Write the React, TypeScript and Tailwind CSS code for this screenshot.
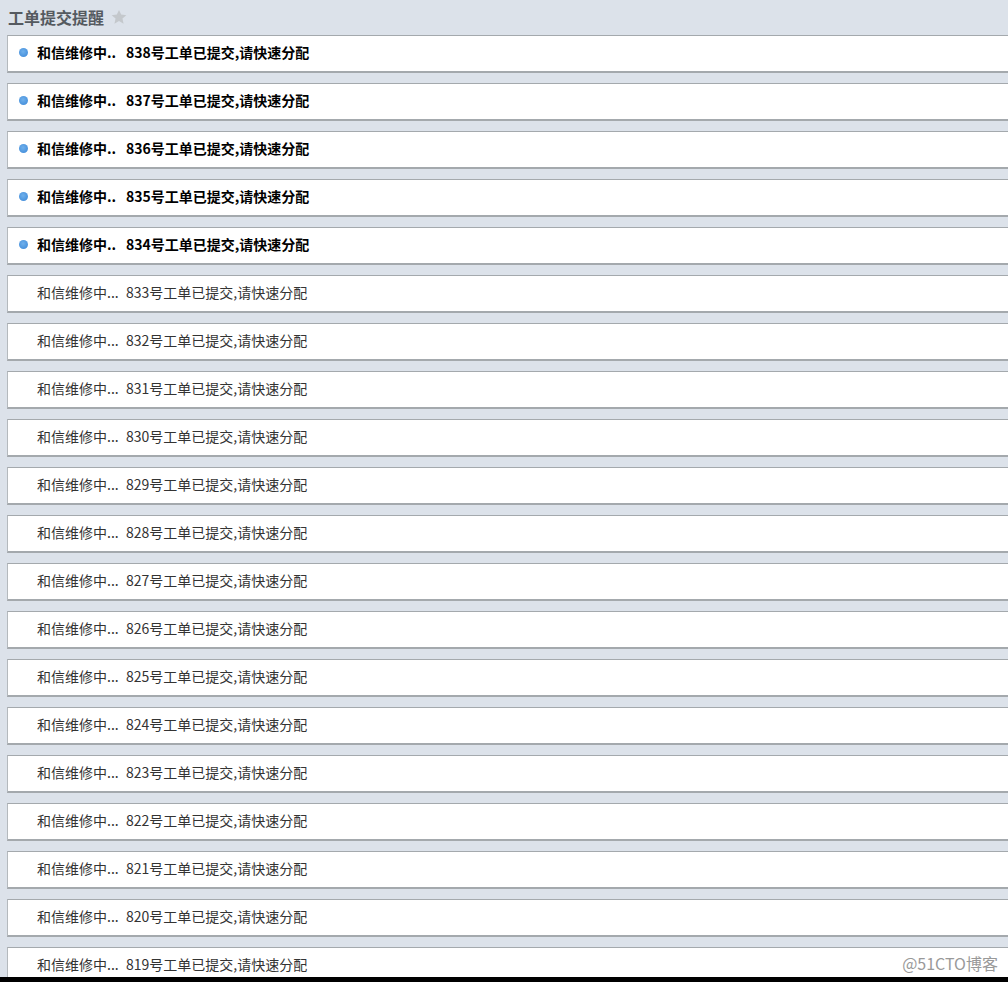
import React from 'react';

interface Notice {
  id: number;
  sender: string;
  unread: boolean;
}

const notices: Notice[] = Array.from({ length: 20 }, (_, i) => ({
  id: 838 - i,
  sender: '和信维修中',
  unread: i < 5,
}));

const App: React.FC = () => {
  return (
    <div
      className="relative h-[982px] w-[1008px] overflow-hidden bg-[#dce2ea]"
      style={{ fontFamily: '"Microsoft YaHei", "Noto Sans CJK SC", sans-serif' }}
    >
      <div className="flex h-[35px] items-center pl-[8px] pb-[1px]">
        <h1 className="text-[16px] font-bold text-[#555a60]">工单提交提醒</h1>
        <svg className="ml-[6px] h-[18px] w-[18px]" viewBox="0 0 24 24">
          <path
            d="M12 2.5l2.9 6.3 6.9.7-5.2 4.6 1.5 6.8L12 17.4l-6.1 3.5 1.5-6.8-5.2-4.6 6.9-.7z"
            fill="#c4c8cc"
          />
        </svg>
      </div>

      <div className="flex flex-col gap-[10px] pl-[7px]">
        {notices.map((n) => (
          <div
            key={n.id}
            className="flex h-[38px] shrink-0 items-center border-t border-l border-b-2 border-t-[#a4a9ad] border-l-[#b4b9bd] border-b-[#a4a9ad] bg-white pb-[2px]"
          >
            <div className="flex w-[29px] justify-center pl-[1px]">
              {n.unread && (
                <span className="h-[9px] w-[9px] rounded-full bg-[radial-gradient(circle_at_45%_40%,#6fb0ec,#3a86d6)]" />
              )}
            </div>
            <span
              className={`w-[89px] text-[14px] ${n.unread ? 'font-bold text-black' : 'text-[#333]'}`}
            >
              {n.sender}
              {n.unread ? '..' : '...'}
            </span>
            <span className={`text-[14px] ${n.unread ? 'font-bold text-black' : 'text-[#333]'}`}>
              {n.id}号工单已提交,请快速分配
            </span>
          </div>
        ))}
      </div>

      <div className="absolute bottom-[7px] right-[10px] text-[16px] text-[#999]">@51CTO博客</div>
      <div className="absolute bottom-0 left-0 h-[5px] w-full bg-black" />
    </div>
  );
};

export default App;
